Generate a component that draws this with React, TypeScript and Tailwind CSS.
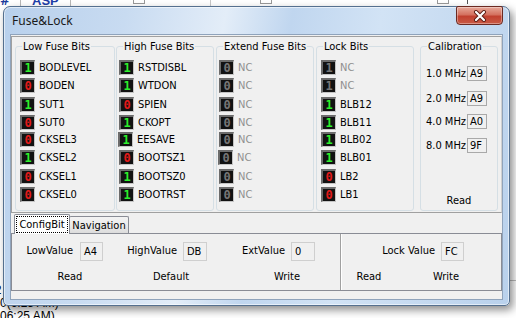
import React from 'react';

type BitRow = [number, string, boolean?, number?];

const low: BitRow[] = [
  [1, 'BODLEVEL'], [0, 'BODEN'], [1, 'SUT1'], [0, 'SUT0'],
  [0, 'CKSEL3'], [1, 'CKSEL2'], [0, 'CKSEL1'], [0, 'CKSEL0'],
];
const high: BitRow[] = [
  [1, 'RSTDISBL'], [1, 'WTDON'], [0, 'SPIEN'], [1, 'CKOPT'],
  [1, 'EESAVE', false, -1], [0, 'BOOTSZ1'], [1, 'BOOTSZ0'], [1, 'BOOTRST'],
];
const ext: BitRow[] = [
  [0, 'NC', true], [0, 'NC', true], [0, 'NC', true], [0, 'NC', true],
  [0, 'NC', true], [0, 'NC', true, -1], [0, 'NC', true], [0, 'NC', true],
];
const lock: BitRow[] = [
  [1, 'NC', true], [1, 'NC', true], [1, 'BLB12'], [1, 'BLB11'],
  [1, 'BLB02'], [1, 'BLB01'], [0, 'LB2'], [0, 'LB1'],
];
const rowH = ['h-[18px]', 'h-[19px]', 'h-[19px]', 'h-[16px]', 'h-[18px]', 'h-[19px]', 'h-[18px]', 'h-[18px]'];

const FONT = "font-['DejaVu_Sans_Condensed','Liberation_Sans',sans-serif]";

function BitBox({ v, dis }: { v: number; dis?: boolean }) {
  const color = dis ? 'text-[#767676]' : v ? 'text-[#2cf02c]' : 'text-[#e21a1a]';
  return (
    <div
      className={`w-[15px] h-[15px] shrink-0 bg-[#121212] border-t-2 border-l-2 border-b border-r border-t-[#6c6c6c] border-l-[#6c6c6c] border-b-[#c4c4c4] border-r-[#c4c4c4] flex items-center justify-center font-['DejaVu_Sans_Mono',monospace] font-bold text-[12px] leading-none ${color}`}
    >
      {v}
    </div>
  );
}

function BitGroup({ title, rows, cls, pl }: { title: string; rows: BitRow[]; cls: string; pl: string }) {
  return (
    <fieldset className={`${cls} h-[171px] border border-[#d5dfe5] rounded-[3px]`}>
      <legend className="ml-[6px] px-[1px] text-[11px] leading-[13px] text-black">{title}</legend>
      <div className={`pt-[5px] ${pl} flex flex-col`}>
        {rows.map(([v, name, dis, shift], i) => (
          <div key={i} className={`${rowH[i]} flex items-center gap-[4px] ${shift ? '-ml-[1px]' : ''}`}>
            <BitBox v={v} dis={dis} />
            <span className={`text-[11px] leading-none ${dis ? 'text-[#8e8e8e]' : 'text-black'}`}>{name}</span>
          </div>
        ))}
      </div>
    </fieldset>
  );
}

const calib: [string, string, string][] = [
  ['1.0 MHz', 'A9', 'mt-[13px]'],
  ['2.0 MHz', 'A9', 'mt-[10px]'],
  ['4.0 MHz', 'A0', 'mt-[8px]'],
  ['8.0 MHz', '9F', 'mt-[9px]'],
];

function ValueBox({ text, w }: { text: string; w: string }) {
  return (
    <div className={`${w} h-[19px] shrink-0 border border-[#cfcfcf] bg-[#f0f0f0] px-[3px] pt-[2px] text-[11px] leading-[13px] text-black`}>
      {text}
    </div>
  );
}

export default function App() {
  return (
    <div className={`relative w-[516px] h-[318px] overflow-hidden bg-white ${FONT}`}>
      {/* background page behind the dialog */}
      <div className="absolute inset-0">
        <div className="absolute left-0 top-[-9px] text-[13px] font-bold text-[#1b3b9c]">#</div>
        <div className="absolute left-[20px] top-0 h-[6px] w-px bg-[#b8b8b8]" />
        <div className="absolute left-[32px] top-[-9px] text-[13px] font-bold text-[#1f3fa8] font-['Liberation_Sans',sans-serif]">ASP</div>
        <div className="absolute left-[70px] top-0 h-[6px] w-px bg-[#b8b8b8]" />
        <div className="absolute left-[210px] top-0 h-[6px] w-px bg-[#c8c8c8]" />
        <div className="absolute left-[133px] top-[-8px] h-[12px] w-[12px] border border-[#9a9a9a]" />
        <div className="absolute left-[260px] top-[-8px] h-[12px] w-[12px] border border-[#9a9a9a]" />
        <div className="absolute left-[437px] top-[-8px] h-[12px] w-[12px] border border-[#9a9a9a]" />
        <div className="absolute left-[467px] top-0 h-[4px] w-px bg-[#555]" />
        <div className="absolute left-[-5px] top-[284px] text-[12px] text-black leading-none">2</div>
        <div className="absolute left-0 top-[297px] text-[12px] text-black leading-none font-['Liberation_Sans',sans-serif]">0(6:25 AM)</div>
        <div className="absolute left-0 top-[310px] text-[12px] text-black leading-none font-['Liberation_Sans',sans-serif]">06:25 AM)</div>
        <div className="absolute left-[509px] top-[280px] h-px w-[7px] bg-[#bdbdbd]" />
      </div>

      {/* dialog window */}
      <div className="absolute left-[3px] top-[6px] w-[507px] h-[300px] rounded-t-[7px] rounded-b-[5px] border border-[#55708f] bg-[linear-gradient(100deg,#b8d0ec_0%,#c8dbf1_22%,#e3edf8_40%,#c0d6ef_52%,#d2e3f5_68%,#b9d1ec_100%)] shadow-[inset_0_0_0_1px_rgba(255,255,255,0.55),3px_4px_8px_rgba(0,0,0,0.45)] flex flex-col">
        <div className="h-[27px] shrink-0 flex items-center pl-[8px] font-['Noto_Sans',sans-serif] text-[12px] text-[#1a1a1a]">
          Fuse&amp;Lock
        </div>
        {/* close button */}
        <div className="absolute top-[-1px] right-[6px] w-[47px] h-[19px] rounded-b-[4px] rounded-t-[2px] border border-[#6b2a22] bg-[linear-gradient(180deg,#e7a99a_0%,#d4715f_45%,#c1402f_55%,#c95a45_100%)] shadow-[inset_0_0_0_1px_rgba(255,255,255,0.35)] flex items-center justify-center">
          <svg width="14" height="12" viewBox="0 0 14 12">
            <path d="M3 2 L11 10 M11 2 L3 10" stroke="#5b1d14" strokeWidth="4" strokeLinecap="round" />
            <path d="M3 2 L11 10 M11 2 L3 10" stroke="#ffffff" strokeWidth="2.2" strokeLinecap="round" />
          </svg>
        </div>

        {/* client area */}
        <div className="mx-[6px] h-[266px] shrink-0 border border-[#8fa3bb] bg-[#f0f0f0] flex flex-col">
          {/* top panel with bit groups */}
          <div className="mt-[1px] h-[177px] border border-t-[#a0a0a0] border-l-[#a0a0a0] border-b-[#a0a0a0] border-r-[#d0d0d0] flex pt-[3px]">
            <BitGroup title="Low Fuse Bits" rows={low} cls="ml-[3px] w-[100px]" pl="pl-[4px]" />
            <BitGroup title="High Fuse Bits" rows={high} cls="ml-[1px] w-[98px]" pl="pl-[2px]" />
            <BitGroup title="Extend Fuse Bits" rows={ext} cls="ml-[2px] w-[98px]" pl="pl-[2px]" />
            <BitGroup title="Lock Bits" rows={lock} cls="ml-[2px] w-[98px]" pl="pl-[4px]" />
            <fieldset className="ml-[6px] w-[78px] h-[171px] border border-[#d5dfe5] rounded-[3px] flex flex-col">
              <legend className="ml-[6px] px-[1px] text-[11px] leading-[13px] text-black">Calibration</legend>
              <div className="flex flex-col pl-[5px]">
                {calib.map(([f, v, mt], i) => (
                  <div key={i} className={`${mt} h-[15px] flex items-center`}>
                    <span className="w-[41px] text-[11px] leading-none text-black whitespace-nowrap">{f}</span>
                    <div className="w-[20px] h-[15px] border border-[#a9a9a9] bg-[#f0f0f0] px-[2px] text-[11px] leading-[13px] text-black">{v}</div>
                  </div>
                ))}
              </div>
              <div className="mt-auto mb-[1px] h-[16px] flex items-center justify-center text-[11px] text-black">Read</div>
            </fieldset>
          </div>

          {/* tabs */}
          <div className="mt-[1px] h-[19px] flex items-end pl-[3px]">
            <div className="relative z-10 -mb-px h-[20px] w-[56px] bg-white border border-b-0 border-[#898c95] rounded-t-[2px] flex items-start justify-center pt-[1px]">
              <span className="border border-dotted border-black px-[2px] h-[17px] flex items-center text-[11px] leading-none text-black">ConfigBit</span>
            </div>
            <div className="-ml-px h-[17px] w-[60px] border border-b-0 border-[#898c95] rounded-t-[2px] bg-[linear-gradient(180deg,#f3f3f3_0%,#ebebeb_50%,#dcdcdc_100%)] flex items-center justify-center text-[11px] leading-none text-black">
              Navigation
            </div>
          </div>
          <div className="h-[58px] border border-[#898c95] bg-[#f0f0f0] flex">
            <div className="w-[328px] flex flex-col pt-[8px]">
              <div className="h-[19px] flex">
                <div className="w-[91px] flex items-center justify-end gap-[7px]">
                  <span className="text-[11px] text-black">LowValue</span>
                  <ValueBox text="A4" w="w-[23px]" />
                </div>
                <div className="w-[104px] flex items-center justify-end gap-[6px]">
                  <span className="text-[11px] text-black">HighValue</span>
                  <ValueBox text="DB" w="w-[24px]" />
                </div>
                <div className="w-[108px] flex items-center justify-end gap-[6px]">
                  <span className="text-[11px] text-black">ExtValue</span>
                  <ValueBox text="0" w="w-[24px]" />
                </div>
              </div>
              <div className="mt-[6px] h-[20px] flex items-center text-[11px] text-black">
                <div className="ml-[18px] w-[80px] text-center">Read</div>
                <div className="ml-[21px] w-[80px] text-center">Default</div>
                <div className="ml-[36px] w-[80px] text-center">Write</div>
              </div>
            </div>
            <div className="w-[2px] border-l border-l-[#a0a0a0] border-r border-r-white" />
            <div className="flex-1 flex flex-col pt-[8px]">
              <div className="h-[19px] flex">
                <div className="w-[122px] flex items-center justify-end gap-[6px]">
                  <span className="text-[11px] text-black">Lock Value</span>
                  <ValueBox text="FC" w="w-[23px]" />
                </div>
              </div>
              <div className="mt-[6px] h-[20px] flex items-center text-[11px] text-black">
                <div className="w-[54px] text-center">Read</div>
                <div className="w-[100px] text-center">Write</div>
              </div>
            </div>
          </div>
        </div>
      </div>
    </div>
  );
}
